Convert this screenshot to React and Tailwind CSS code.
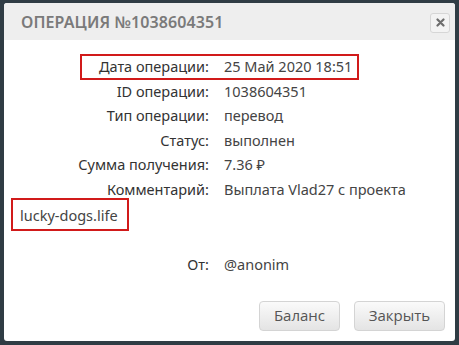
import React from 'react';

const ROWS = [
  ['Дата операции:', '25 Май 2020 18:51', true],
  ['ID операции:', '1038604351'],
  ['Тип операции:', 'перевод'],
  ['Статус:', 'выполнен'],
  ['Сумма получения:', '7.36 ₽'],
];

const Row = ({ label, value }) => (
  <div className="flex h-[24.5px] items-center">
    <div className="w-[205px] shrink-0 text-right text-[#333]">{label}</div>
    <div className="pl-[15px] text-[#444]">{value}</div>
  </div>
);

export default function App() {
  return (
    <div
      className="w-[459px] h-[345px] bg-[#2f3c44] pt-[3px] pl-[4px]"
      style={{ fontFamily: '"Noto Sans", "Liberation Sans", sans-serif' }}
    >
      <div className="w-[451px] h-[338px] rounded-[3px] bg-white overflow-hidden flex flex-col">
        {/* header */}
        <div className="h-[37px] bg-[#eeeeee] flex items-center justify-between pl-[17px] pr-[5px] shrink-0">
          <div className="text-[16px] font-semibold tracking-[0.1px] text-[#7a7a7a] leading-none pt-[1px]">
            ОПЕРАЦИЯ №1038604351
          </div>
          <button className="w-[20px] h-[20px] mt-[2px] rounded-[3px] border border-[#d6d6d6] bg-[#f3f3f3] flex items-center justify-center">
            <svg width="9" height="9" viewBox="0 0 9 9">
              <path d="M1.5 1.5 L7.5 7.5 M7.5 1.5 L1.5 7.5" stroke="#6d6d6d" strokeWidth="2.2" strokeLinecap="round" />
            </svg>
          </button>
        </div>

        {/* body */}
        <div className="relative flex flex-col pt-[15px] text-[14.5px]">
          <div className="absolute left-[76px] top-[14px] w-[279px] h-[26px] border-2 border-[#d11a1a]" />
          {ROWS.map(([l, v]) => (
            <Row key={l} label={l} value={v} />
          ))}
          <Row label="Комментарий:" value="Выплата Vlad27 с проекта" />
          <div className="h-[28px] flex items-center pl-[16px] text-[#444]">lucky-dogs.life</div>
          <div className="absolute left-[7px] top-[158px] w-[118px] h-[33px] border-2 border-[#d11a1a]" />
          <div className="h-[23px]" />
          <Row label="От:" value="@anonim" />
        </div>

        {/* footer */}
        <div className="flex justify-end gap-[14px] pr-[10px] mt-[23px] text-[15px]" style={{ fontFamily: '"Open Sans", "Liberation Sans", sans-serif' }}>
          <button className="w-[81px] h-[30px] rounded-[4px] border border-[#d4d4d4] bg-gradient-to-b from-[#fafafa] to-[#e4e4e4] text-[#555]">
            Баланс
          </button>
          <button className="w-[91px] h-[30px] rounded-[4px] border border-[#d4d4d4] bg-gradient-to-b from-[#fafafa] to-[#e4e4e4] text-[#555]">
            Закрыть
          </button>
        </div>
      </div>
    </div>
  );
}
